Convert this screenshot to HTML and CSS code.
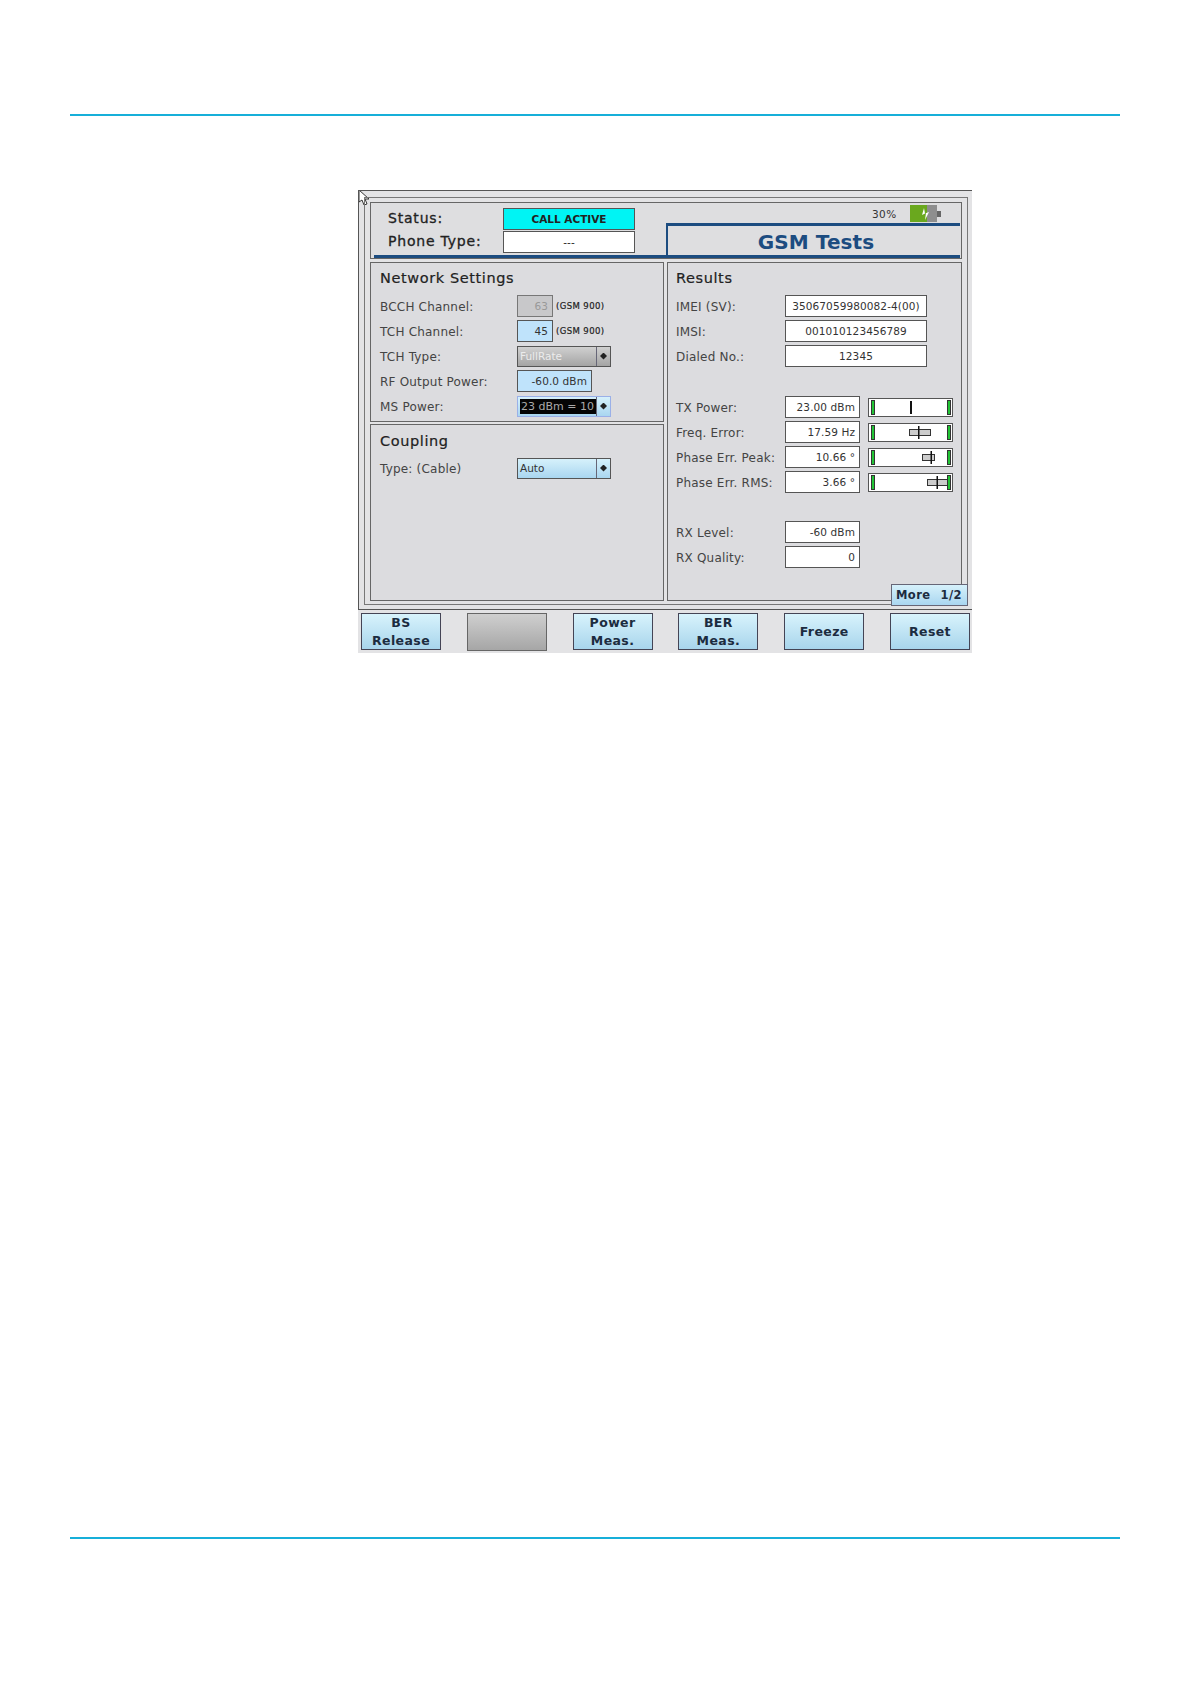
FILE: index.html
```html
<!DOCTYPE html>
<html lang="en">
<head>
    <meta charset="UTF-8">
    <title>GSM Tests</title>
    <link rel="stylesheet" href="styles.css">
</head>
<body>
    <div class="rule rule-top"></div>

    <div class="screen">
        <svg class="cursor" viewBox="0 0 12 15"><path d="M1 0 L11 9 L7 9 L9 14 L6 15 L4 10 L1 12 Z" fill="#fff" stroke="#333" stroke-width="1"/></svg>

        <div class="frame">
            <div class="inner">
                <div class="header">
                    <div class="status">
                        <span class="status-label">Status:</span>
                        <span class="status-value active">CALL ACTIVE</span>
                        <span class="status-label">Phone Type:</span>
                        <span class="status-value">---</span>
                    </div>
                    <div class="header-right">
                        <div class="battery">
                            <span class="battery-text">30%</span>
                            <svg class="battery-icon" viewBox="0 0 32 17">
                                <rect x="0" y="0" width="17" height="17" fill="#6aa81e"/>
                                <rect x="17" y="0" width="10" height="17" fill="#8e8e8e"/>
                                <rect x="27" y="6" width="4" height="6" fill="#666"/>
                                <path d="M14 3 L12 10 L16 8 L15 15 L19 7 L15 8.5 Z" fill="#fff"/>
                            </svg>
                        </div>
                        <div class="tab">GSM Tests</div>
                    </div>
                </div>

                <div class="columns">
                    <div class="column">
                        <section class="panel panel-network">
                            <h2>Network Settings</h2>
                            <div class="row">
                                <label>BCCH Channel:</label>
                                <span class="field field-channel disabled">63</span>
                                <span class="band">(GSM 900)</span>
                            </div>
                            <div class="row">
                                <label>TCH Channel:</label>
                                <span class="field field-channel editable">45</span>
                                <span class="band">(GSM 900)</span>
                            </div>
                            <div class="row">
                                <label>TCH Type:</label>
                                <span class="select disabled"><span class="select-text">FullRate</span><span class="select-arrow"></span></span>
                            </div>
                            <div class="row">
                                <label>RF Output Power:</label>
                                <span class="field field-short editable">-60.0 dBm</span>
                            </div>
                            <div class="row">
                                <label>MS Power:</label>
                                <span class="select focused"><span class="select-text">23 dBm = 10</span><span class="select-arrow"></span></span>
                            </div>
                        </section>
                        <section class="panel panel-coupling">
                            <h2>Coupling</h2>
                            <div class="row">
                                <label>Type: (Cable)</label>
                                <span class="select"><span class="select-text">Auto</span><span class="select-arrow"></span></span>
                            </div>
                        </section>
                    </div>

                    <section class="panel panel-results">
                        <h2>Results</h2>
                        <div class="group group-ids">
                            <div class="row row-result">
                                <label>IMEI (SV):</label>
                                <span class="field field-long">35067059980082-4(00)</span>
                            </div>
                            <div class="row row-result">
                                <label>IMSI:</label>
                                <span class="field field-long">001010123456789</span>
                            </div>
                            <div class="row row-result">
                                <label>Dialed No.:</label>
                                <span class="field field-long">12345</span>
                            </div>
                        </div>
                        <div class="group group-gauges">
                            <div class="row row-result">
                                <label>TX Power:</label>
                                <span class="field field-short">23.00 dBm</span>
                                <svg class="gauge" viewBox="0 0 85 19">
                                    <rect class="gauge-bg" x="0.5" y="0.5" width="84" height="18"/>
                                    <rect class="gauge-end" x="3.5" y="2.5" width="3" height="14"/>
                                    <rect class="gauge-end" x="79.5" y="2.5" width="3" height="14"/>
                                    <rect class="gauge-tick" x="42" y="3" width="2" height="13"/>
                                </svg>
                            </div>
                            <div class="row row-result">
                                <label>Freq. Error:</label>
                                <span class="field field-short">17.59 Hz</span>
                                <svg class="gauge" viewBox="0 0 85 19">
                                    <rect class="gauge-bg" x="0.5" y="0.5" width="84" height="18"/>
                                    <rect class="gauge-end" x="3.5" y="2.5" width="3" height="14"/>
                                    <rect class="gauge-end" x="79.5" y="2.5" width="3" height="14"/>
                                    <rect class="gauge-box" x="41.5" y="6.5" width="21" height="6"/>
                                    <rect class="gauge-tick" x="50" y="3" width="1.5" height="13"/>
                                </svg>
                            </div>
                            <div class="row row-result">
                                <label>Phase Err. Peak:</label>
                                <span class="field field-short">10.66 °</span>
                                <svg class="gauge" viewBox="0 0 85 19">
                                    <rect class="gauge-bg" x="0.5" y="0.5" width="84" height="18"/>
                                    <rect class="gauge-end" x="3.5" y="2.5" width="3" height="14"/>
                                    <rect class="gauge-end" x="79.5" y="2.5" width="3" height="14"/>
                                    <rect class="gauge-box" x="54.5" y="6.5" width="12" height="6"/>
                                    <rect class="gauge-tick" x="62.5" y="3" width="1.5" height="13"/>
                                </svg>
                            </div>
                            <div class="row row-result">
                                <label>Phase Err. RMS:</label>
                                <span class="field field-short">3.66 °</span>
                                <svg class="gauge" viewBox="0 0 85 19">
                                    <rect class="gauge-bg" x="0.5" y="0.5" width="84" height="18"/>
                                    <rect class="gauge-end" x="3.5" y="2.5" width="3" height="14"/>
                                    <rect class="gauge-end" x="79.5" y="2.5" width="3" height="14"/>
                                    <rect class="gauge-box" x="59.5" y="6.5" width="20" height="6"/>
                                    <rect class="gauge-tick" x="68.5" y="3" width="1.5" height="13"/>
                                </svg>
                            </div>
                        </div>
                        <div class="group">
                            <div class="row row-result">
                                <label>RX Level:</label>
                                <span class="field field-short">-60 dBm</span>
                            </div>
                            <div class="row row-result">
                                <label>RX Quality:</label>
                                <span class="field field-short">0</span>
                            </div>
                        </div>
                    </section>
                </div>
            </div>
            <div class="more"><span>More</span><span>1/2</span></div>
        </div>

        <div class="softkeys">
            <button>BS<br>Release</button>
            <button class="blank"></button>
            <button>Power<br>Meas.</button>
            <button>BER<br>Meas.</button>
            <button>Freeze</button>
            <button>Reset</button>
        </div>
    </div>

    <div class="rule rule-bottom"></div>
</body>
</html>
```
FILE: styles.css
```css
* {
    box-sizing: border-box;
}
body {
    margin: 0;
    background-color: #fff;
    font-family: "DejaVu Sans", sans-serif;
    color: #333;
}
.rule {
    width: 1050px;
    height: 2px;
    margin-left: 70px;
    background-color: #17afd9;
}
.rule-top {
    margin-top: 114px;
}
.rule-bottom {
    margin-top: 884px;
}
.screen {
    position: relative;
    width: 614px;
    height: 463px;
    margin: 74px 0 0 358px;
    background-color: #e3e3e5;
}
.cursor {
    position: absolute;
    left: 0;
    top: 0;
    width: 12px;
    height: 15px;
}
.frame {
    position: relative;
    height: 420px;
    padding: 6px 4px 0 6px;
    border-top: 1px solid #555;
    border-left: 1px solid #555;
    border-bottom: 1px solid #555;
}
.inner {
    width: 604px;
    height: 408px;
    padding: 4px 5px 3px;
    border: 1px solid #777;
    margin-left: -1px;
}
.header {
    display: flex;
    height: 57px;
    border: 1px solid #666;
    background-color: #dedee0;
}
.status {
    display: grid;
    grid-template-columns: 115px 132px;
    grid-auto-rows: 22px;
    row-gap: 1px;
    width: 295px;
    height: 55px;
    padding: 5px 0 0 14px;
    border-bottom: 3px solid #1c4c80;
    margin-left: 3px;
    flex: none;
}
.status-label {
    font-size: 14px;
    line-height: 20px;
    letter-spacing: 0.8px;
    color: #222;
    -webkit-text-stroke: 0.3px #222;
}
.status-value {
    border: 1px solid #555;
    background-color: #fff;
    font-size: 10.5px;
    line-height: 20px;
    text-align: center;
    color: #222;
}
.active {
    background-color: #00f4f4;
    font-weight: bold;
}
.header-right {
    flex: 1;
    display: flex;
    flex-direction: column;
    height: 55px;
}
.battery {
    display: flex;
    align-items: center;
    height: 20px;
    padding: 1px 0 0 203px;
}
.battery-text {
    width: 38px;
    font-size: 10.5px;
    letter-spacing: 0.4px;
}
.battery-icon {
    width: 32px;
    height: 17px;
}
.tab {
    height: 35px;
    margin-left: -3px;
    margin-right: 1px;
    padding: 4px 0 0 4px;
    border-top: 3px solid #1c4c80;
    border-left: 2px solid #1c4c80;
    border-bottom: 3px solid #1c4c80;
    text-align: center;
    font-size: 20px;
    font-weight: bold;
    line-height: 25px;
    letter-spacing: 0.1px;
    color: #1c4c80;
}
.columns {
    display: grid;
    grid-template-columns: 294px 295px;
    column-gap: 3px;
    height: 339px;
    margin-top: 3px;
}
.column {
    display: flex;
    flex-direction: column;
    gap: 2px;
}
.panel {
    padding: 2px 0 0 9px;
    border: 1px solid #666;
    background-color: #dcdcdf;
}
.panel-network {
    height: 160px;
}
.panel-coupling {
    flex: 1;
    padding-top: 3px;
}
.panel-coupling h2 {
    margin-bottom: 3px;
}
.panel-results {
    padding-left: 8px;
}
h2 {
    margin: 0 0 4px;
    font-size: 14.5px;
    font-weight: normal;
    line-height: 26px;
    letter-spacing: 0.6px;
    color: #222;
    -webkit-text-stroke: 0.2px #222;
}
.row {
    display: flex;
    align-items: center;
    height: 22px;
    margin-bottom: 3px;
}
label {
    width: 137px;
    flex: none;
    padding-top: 2px;
    font-size: 12px;
    letter-spacing: 0.2px;
    color: #444;
    white-space: nowrap;
}
.row-result label {
    width: 109px;
}
.field {
    height: 22px;
    padding-right: 4px;
    border: 1px solid #555;
    background-color: #fff;
    font-size: 10.5px;
    line-height: 20px;
    letter-spacing: 0.1px;
    text-align: right;
    white-space: nowrap;
}
.field-channel {
    width: 36px;
}
.field-short {
    width: 75px;
}
.field-long {
    width: 142px;
    padding-right: 0;
    text-align: center;
}
.editable {
    background-color: #bfe3fb;
}
.disabled {
    color: #999;
}
.field.disabled {
    background-color: #c8c8ca;
    border-color: #777;
}
.band {
    margin-left: 3px;
    font-size: 8.5px;
    letter-spacing: 0.4px;
    color: #222;
    -webkit-text-stroke: 0.2px #222;
}
.select {
    display: flex;
    width: 94px;
    height: 21px;
    border: 1px solid #555;
    background: linear-gradient(#d6f1fb, #a9d6f0);
    font-size: 10.5px;
    line-height: 19px;
}
.select-text {
    flex: 1;
    padding-left: 2px;
    white-space: nowrap;
    overflow: hidden;
}
.select-arrow {
    position: relative;
    width: 14px;
    border-left: 1px solid #667;
}
.select-arrow::after {
    content: "";
    position: absolute;
    left: 3px;
    top: 6px;
    width: 7px;
    height: 7px;
    background-color: #222;
    clip-path: polygon(50% 0, 100% 50%, 50% 100%, 0 50%);
}
.select.disabled {
    background: linear-gradient(#d0d0d0, #a4a4a4);
    color: #ececec;
}
.select.focused {
    border-color: #9ab0e8;
    color: #aaa;
}
.select.focused .select-text {
    margin: 2px 0 2px 2px;
    padding-left: 1px;
    background-color: #050505;
    font-size: 11px;
    line-height: 15px;
}
.group-ids {
    margin-bottom: 29px;
}
.group-gauges {
    margin-bottom: 28px;
}
.gauge {
    width: 85px;
    height: 19px;
    margin-left: 8px;
}
.gauge-bg {
    fill: #fff;
    stroke: #555;
}
.gauge-end {
    fill: #22c435;
    stroke: #333;
}
.gauge-box {
    fill: #ccc;
    stroke: #333;
}
.gauge-tick {
    fill: #111;
}
.more {
    position: absolute;
    left: 532px;
    top: 393px;
    display: flex;
    justify-content: space-between;
    width: 77px;
    height: 22px;
    padding: 0 5px 0 4px;
    border: 1px solid #667;
    background: linear-gradient(#d6f1fb, #a9d6f0);
    font-size: 11.5px;
    font-weight: bold;
    line-height: 20px;
    letter-spacing: 0.4px;
    color: #1c2c40;
    white-space: nowrap;
}
.softkeys {
    display: flex;
    justify-content: space-between;
    padding: 3px 2px 0 3px;
}
button {
    width: 80px;
    height: 37px;
    padding: 0;
    border: 1px solid #445;
    background: linear-gradient(#d8f3fc, #a8d5ec);
    font-family: "DejaVu Sans", sans-serif;
    font-size: 12.5px;
    font-weight: bold;
    line-height: 18px;
    letter-spacing: 0.4px;
    color: #1c2c40;
}
.blank {
    height: 38px;
    background: linear-gradient(#cfcfcf, #a6a6a6);
    border-color: #666;
}
```
